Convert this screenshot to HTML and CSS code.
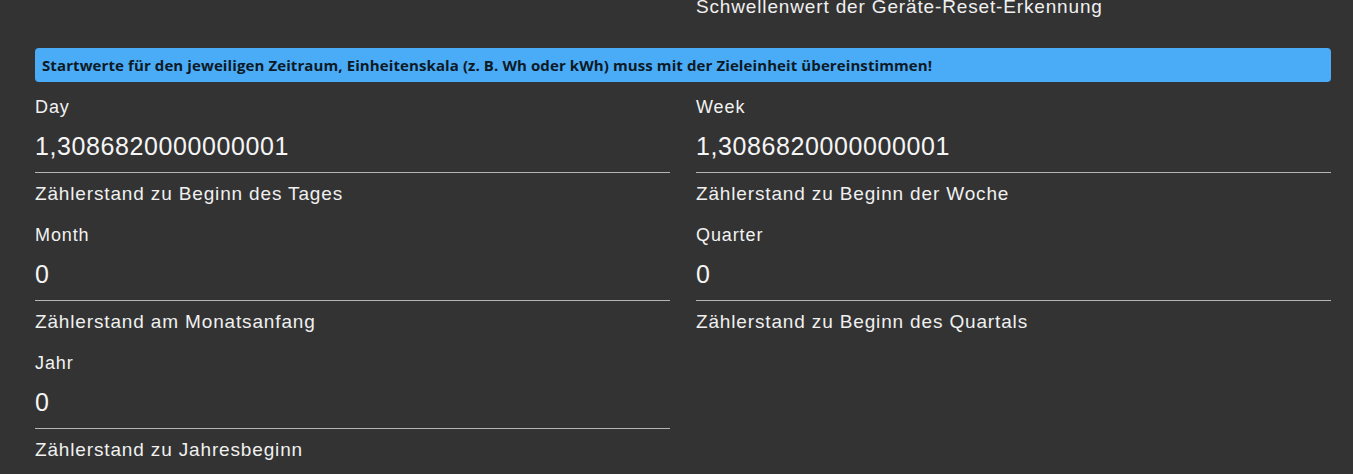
FILE: index.html
```html
<!DOCTYPE html>
<html lang="de">
<head>
<meta charset="utf-8">
<link rel="stylesheet" href="styles.css">
</head>
<body>
<div class="page">
  <div class="grid top">
    <div></div>
    <div class="help">Schwellenwert der Geräte-Reset-Erkennung</div>
  </div>
  <div class="banner">Startwerte für den jeweiligen Zeitraum, Einheitenskala (z. B. Wh oder kWh) muss mit der Zieleinheit übereinstimmen!</div>
  <div class="grid fields">
    <div class="field">
      <div class="label">Day</div>
      <div class="value">1,3086820000000001</div>
      <div class="help">Zählerstand zu Beginn des Tages</div>
    </div>
    <div class="field">
      <div class="label">Week</div>
      <div class="value">1,3086820000000001</div>
      <div class="help">Zählerstand zu Beginn der Woche</div>
    </div>
    <div class="field">
      <div class="label">Month</div>
      <div class="value">0</div>
      <div class="help">Zählerstand am Monatsanfang</div>
    </div>
    <div class="field">
      <div class="label">Quarter</div>
      <div class="value">0</div>
      <div class="help">Zählerstand zu Beginn des Quartals</div>
    </div>
    <div class="field">
      <div class="label">Jahr</div>
      <div class="value">0</div>
      <div class="help">Zählerstand zu Jahresbeginn</div>
    </div>
  </div>
</div>
</body>
</html>
```

FILE: styles.css
```css
html, body {
  margin: 0;
  padding: 0;
  background: #333333;
  height: 100%;
  overflow: hidden;
}
.page {
  padding: 0 22px 0 35px;
  font-family: "Liberation Sans", Arial, sans-serif;
  color: #f2f2f2;
}
.grid {
  display: grid;
  grid-template-columns: 1fr 1fr;
  column-gap: 26px;
}
.top {
  margin-top: -4px;
  height: 52px;
}
.help {
  font-size: 19px;
  line-height: 22px;
  letter-spacing: 0.85px;
  color: #f0f0f0;
}
.banner {
  background: #4aabf6;
  border-radius: 4px;
  height: 34px;
  box-sizing: border-box;
  padding: 0 7px;
  display: flex;
  align-items: center;
  font-family: "Open Sans", "Noto Sans", sans-serif;
  font-weight: 700;
  font-size: 15px;
  letter-spacing: 0.1px;
  color: #0d1a26;
}
.field {
  height: 128px;
  display: flex;
  flex-direction: column;
}
.label {
  font-size: 18px;
  line-height: 22px;
  letter-spacing: 0.9px;
  margin-top: 14px;
}
.value {
  font-size: 25px;
  line-height: 30px;
  letter-spacing: 0.6px;
  margin-top: 13px;
  padding-bottom: 11px;
  border-bottom: 1px solid #b5b5b5;
  color: #f5f5f5;
}
.field .help {
  margin-top: 10px;
}
```
